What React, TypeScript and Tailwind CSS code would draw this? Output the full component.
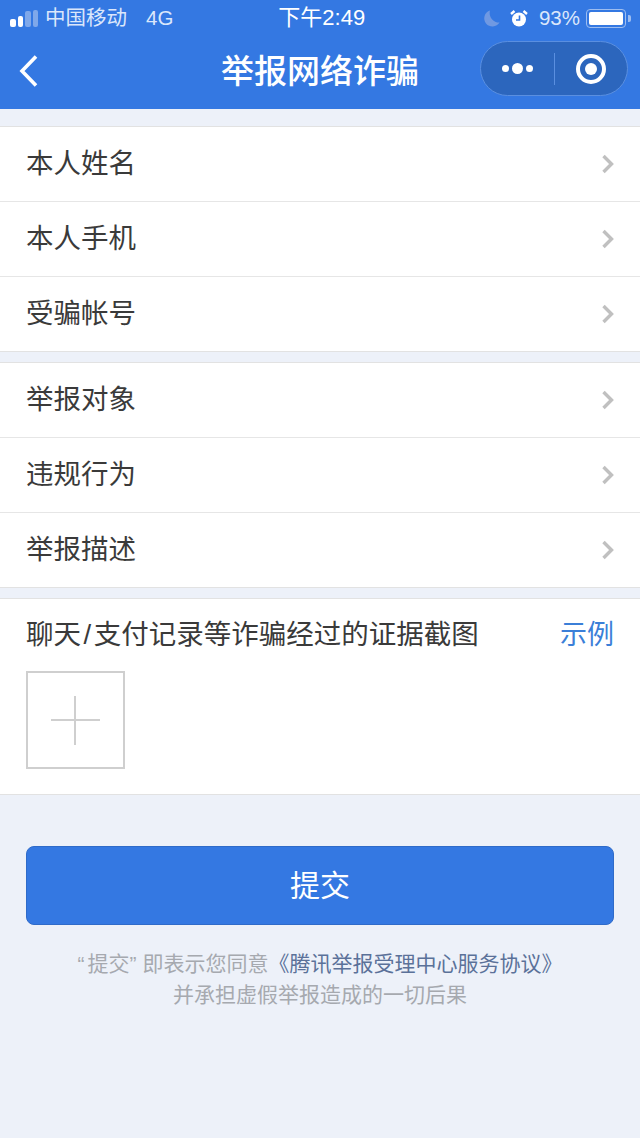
import React from 'react';

const cjk = "font-['Liberation_Sans','Noto_Sans_CJK_SC',sans-serif]";

const Row: React.FC<{ label: string; last?: boolean }> = ({ label, last }) => (
  <div className={`flex items-center pl-[26px] ${last ? 'h-[74px]' : 'h-[75px] border-b border-[#e6e6e6]'}`}>
    <span className="flex-1 text-[27.5px] leading-none text-[#3a3a3a]">{label}</span>
    <svg width="14" height="22" viewBox="0 0 14 22" className="mr-[25px]" fill="none">
      <path d="M2.5 3 L10.5 11 L2.5 19" stroke="#c0c0c0" strokeWidth="3.4" />
    </svg>
  </div>
);

const Group: React.FC<{ labels: string[] }> = ({ labels }) => (
  <div className="mb-[10px] border-y border-[#e2e2e2] bg-white">
    {labels.map((l, i) => (
      <Row key={l} label={l} last={i === labels.length - 1} />
    ))}
  </div>
);

const StatusBar: React.FC = () => (
  <div className="flex h-[36px] items-center pl-[10px] pr-[9px] text-[20.5px] leading-none text-[#dbe7fb]">
    <div className="flex w-[28px] items-end gap-[2px] pt-[1px]">
      <i className="h-[8px] w-[6px] rounded-[2px] bg-white" />
      <i className="h-[11px] w-[5px] rounded-[2px] bg-white" />
      <i className="h-[16px] w-[6px] rounded-[2px] bg-[#7fa8ea]" />
      <i className="h-[17px] w-[5px] rounded-[2px] bg-[#7fa8ea]" />
    </div>
    <span className="ml-[7px]">中国移动</span>
    <span className="ml-[19px]">4G</span>
    <span className="ml-[105px] whitespace-nowrap text-[22px] text-white">下午2:49</span>
    <div className="ml-auto flex items-center">
      <svg width="16" height="17" viewBox="0 0 16 17">
        <path d="M6 0.5 A8.2 8.2 0 1 0 15.5 12.5 A9.5 9.5 0 0 1 6 0.5 Z" fill="#7099e2" />
      </svg>
      <svg width="18" height="17" viewBox="0 0 18 17" className="ml-[10px]">
        <circle cx="9" cy="9.5" r="7" fill="#fff" />
        <path d="M9.5 5.5 V10 H6" stroke="#3377e0" strokeWidth="1.6" fill="none" />
        <path d="M1 4 L4.5 1 M17 4 L13.5 1" stroke="#fff" strokeWidth="2.4" />
      </svg>
      <span className="ml-[11px]">93%</span>
      <div className="ml-[6px] flex h-[19px] w-[40px] items-center rounded-[4px] border border-[#9dbdf0] p-[2px]">
        <div className="h-[13px] w-[34px] rounded-[2px] bg-white" />
      </div>
      <i className="ml-[2px] h-[7px] w-[3px] rounded-r-[2px] bg-[#9dbdf0]" />
    </div>
  </div>
);

const NavBar: React.FC = () => (
  <div className="relative flex h-[73px] items-center justify-center">
    <svg width="20" height="34" viewBox="0 0 20 34" className="absolute left-[19px] top-[18px]" fill="none">
      <path d="M17 2.5 L3 17 L17 31.5" stroke="#fff" strokeWidth="3.6" />
    </svg>
    <span className="mb-[2px] text-[33px] font-medium leading-none text-white">举报网络诈骗</span>
    <div className="absolute left-[480px] top-[5px] flex h-[55px] w-[148px] items-center rounded-full border border-[#5a8fe0] bg-[#2c66bd]">
      <div className="flex w-[73px] items-center justify-center gap-[3px]">
        <i className="h-[7px] w-[7px] rounded-full bg-white" />
        <i className="h-[11px] w-[11px] rounded-full bg-white" />
        <i className="h-[7px] w-[7px] rounded-full bg-white" />
      </div>
      <div className="h-[32px] w-px bg-[#5a8fe0]" />
      <div className="flex flex-1 items-center justify-center">
        <div className="flex h-[30px] w-[30px] items-center justify-center rounded-full border-[4px] border-white">
          <i className="h-[12px] w-[12px] rounded-full bg-white" />
        </div>
      </div>
    </div>
  </div>
);

const App: React.FC = () => (
  <div className={`flex h-[1138px] w-[640px] flex-col overflow-hidden bg-[#edf1f9] ${cjk}`}>
    <div className="h-[109px] bg-[#3478e2]">
      <StatusBar />
      <NavBar />
    </div>

    <div className="mt-[17px]">
      <Group labels={['本人姓名', '本人手机', '受骗帐号']} />
      <Group labels={['举报对象', '违规行为', '举报描述']} />
    </div>

    <div className="h-[197px] border-y border-[#e2e2e2] bg-white px-[26px]">
      <div className="flex h-[72px] items-center justify-between">
        <span className="text-[27.5px] leading-none text-[#3a3a3a]">
          聊天<span className="mx-[2.5px]">/</span>支付记录等诈骗经过的证据截图
        </span>
        <span className="text-[27px] leading-none text-[#3b7fd8]">示例</span>
      </div>
      <div className="relative h-[98px] w-[99px] border-2 border-[#cfcfcf]">
        <i className="absolute left-[23px] top-[46px] h-[2px] w-[49px] bg-[#cfcfcf]" />
        <i className="absolute left-[46px] top-[23px] h-[49px] w-[2px] bg-[#cfcfcf]" />
      </div>
    </div>

    <div className="mx-[26px] mt-[51px] flex h-[79px] items-center justify-center rounded-[8px] border border-[#2f6bc9] bg-[#3478e2] text-[30px] leading-none text-white">
      提交
    </div>

    <div className="mt-[23px] text-center text-[21px] leading-[31px] text-[#a6a9af]">
      <div>
        <span className="mr-[3px]">“</span>提交<span className="mr-[6px]">”</span>即表示您同意
        <span className="text-[#5b7199]">《腾讯举报受理中心服务协议》</span>
      </div>
      <div>并承担虚假举报造成的一切后果</div>
    </div>
  </div>
);

export default App;
